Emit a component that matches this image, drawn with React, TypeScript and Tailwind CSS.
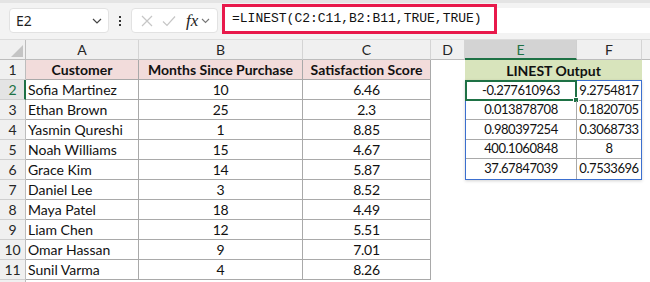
import React from 'react';

const rows = [
	['Sofia Martinez', '10', '6.46'],
	['Ethan Brown', '25', '2.3'],
	['Yasmin Qureshi', '1', '8.85'],
	['Noah Williams', '15', '4.67'],
	['Grace Kim', '14', '5.87'],
	['Daniel Lee', '3', '8.52'],
	['Maya Patel', '18', '4.49'],
	['Liam Chen', '12', '5.51'],
	['Omar Hassan', '9', '7.01'],
	['Sunil Varma', '4', '8.26'],
];

const linest = [
	['-0.277610963', '9.2754817'],
	['0.013878708', '0.1820705'],
	['0.980397254', '0.3068733'],
	['400.1060848', '8'],
	['37.67847039', '0.7533696'],
];

const cellFont = { fontFamily: 'Lato, "Liberation Sans", sans-serif' };

const Toolbar = () => (
	<div className="flex h-[37px] items-start border-b border-[#dcdcdc] bg-[#f3f3f3]">
		<div className="ml-[9px] mt-[5px] flex h-[25px] w-[100px] items-center justify-between rounded-[4px] border border-[#e2e2e2] bg-white pl-[6px] pr-[6px]">
			<span className="text-[14px] text-[#1f1f1f]" style={{ fontFamily: '"Noto Sans", sans-serif' }}>
				E2
			</span>
			<svg width="10" height="6" viewBox="0 0 10 6">
				<path d="M1 1l4 4 4-4" fill="none" stroke="#444" strokeWidth="1.2" />
			</svg>
		</div>
		<div className="mt-[5px] flex h-[25px] w-[22px] flex-col items-center justify-center gap-[2px]">
			<span className="h-[2px] w-[2px] bg-[#333]" />
			<span className="h-[2px] w-[2px] bg-[#333]" />
			<span className="h-[2px] w-[2px] bg-[#333]" />
		</div>
		<div className="mt-[5px] flex h-[25px] w-[87px] items-center rounded-[4px] border border-[#e2e2e2] bg-white pl-[9px]">
			<svg width="12" height="12" viewBox="0 0 12 12">
				<path d="M1 1l10 10M11 1L1 11" stroke="#c6c6c6" strokeWidth="1.2" />
			</svg>
			<svg width="14" height="12" viewBox="0 0 14 12" className="ml-[9px]">
				<path d="M1 6.5l4 4L13 1.5" fill="none" stroke="#c6c6c6" strokeWidth="1.2" />
			</svg>
			<span
				className="ml-[10px] text-[17px] italic leading-none text-[#222]"
				style={{ fontFamily: '"Liberation Serif", serif' }}
			>
				fx
			</span>
			<svg width="9" height="6" viewBox="0 0 9 6" className="ml-[3px]">
				<path d="M1 1l3.5 3.5L8 1" fill="none" stroke="#777" strokeWidth="1.1" />
			</svg>
		</div>
		<div className="ml-[4px] mt-[1px] flex h-[30px] w-[275px] items-center border-[3px] border-[#e8194b] bg-white pl-[7px]">
			<span className="text-[13px] text-[#111]" style={{ fontFamily: '"Liberation Mono", monospace' }}>
				=LINEST(C2:C11,B2:B11,TRUE,TRUE)
			</span>
		</div>
		<div className="mt-[5px] h-[25px] flex-1 bg-white" />
	</div>
);

const ColHead = ({ label, active }: { label: string; active?: boolean }) => (
	<div
		className={
			active
				? 'flex h-[20px] items-center justify-center border-r border-b-2 border-r-[#d0d0d0] border-b-[#1e7145] bg-[#d3d3d3] text-[14px] text-[#1e7145]'
				: 'flex h-[20px] items-center justify-center border-r border-b border-r-[#d4d4d4] border-b-[#bdbdbd] bg-[#f0f0f0] text-[14px] text-[#262626]'
		}
	>
		{label}
	</div>
);

const RowHead = ({ n, active }: { n?: number; active?: boolean }) => (
	<div
		className={
			active
				? 'flex h-[20px] items-center justify-center border-r-2 border-b border-r-[#1e7145] border-b-[#cfcfcf] bg-[#e4e4e4] pl-[1px] text-[14px] text-[#1e7145]'
				: 'flex h-[20px] items-center justify-center border-r border-b border-r-[#bdbdbd] border-b-[#cfcfcf] bg-[#f0f0f0] text-[14px] text-[#262626]'
		}
	>
		{n}
	</div>
);

const App = () => {
	return (
		<div className="w-[650px] overflow-hidden bg-white" style={cellFont}>
			<div className="h-[3px] bg-[#e4e4e4]" />
			<Toolbar />
			<div className="grid grid-cols-[26px_113px_164px_128px_34px_112px_65px_1fr] auto-rows-[20px]">
				{/* column headers */}
				<div className="flex h-[20px] items-end justify-end border-r border-b border-r-[#bdbdbd] border-b-[#bdbdbd] bg-[#f0f0f0] pb-[2px] pr-[2px]">
					<svg width="12" height="12" viewBox="0 0 12 12">
						<path d="M12 0V12H0Z" fill="#c4c4c4" />
					</svg>
				</div>
				<ColHead label="A" />
				<ColHead label="B" />
				<ColHead label="C" />
				<ColHead label="D" />
				<ColHead label="E" active />
				<ColHead label="F" />
				<div className="h-[20px] border-b border-b-[#bdbdbd] bg-[#f0f0f0]" />

				{/* row 1 */}
				<RowHead n={1} />
				<div className="flex items-center justify-center border-r border-b border-[#a9a9a9] bg-[#f2dcdb] text-[14px] font-bold text-[#111]">
					Customer
				</div>
				<div className="flex items-center justify-center border-r border-b border-[#a9a9a9] bg-[#f2dcdb] text-[14px] font-bold text-[#111]">
					Months Since Purchase
				</div>
				<div className="flex items-center justify-center border-r border-b border-[#a9a9a9] bg-[#f2dcdb] text-[14px] font-bold text-[#111]">
					Satisfaction Score
				</div>
				<div />
				<div className="col-span-2 flex items-center justify-center bg-[#d8e4bc] text-[14px] font-bold text-[#111]">
					LINEST Output
				</div>
				<div />

				{/* data rows */}
				{rows.map((r, i) => (
					<React.Fragment key={r[0]}>
						<RowHead n={i + 2} active={i === 0} />
						<div className="flex items-center border-r border-b border-[#a9a9a9] pl-[2px] text-[14px] text-[#111]">
							{r[0]}
						</div>
						<div className="flex items-center justify-center border-r border-b border-[#a9a9a9] text-[14px] tracking-[-0.3px] text-[#111]">
							{r[1]}
						</div>
						<div className="flex items-center justify-center border-r border-b border-[#a9a9a9] text-[14px] tracking-[-0.3px] text-[#111]">
							{r[2]}
						</div>
						<div />
						{i === 0 && (
							<div className="col-span-2 row-span-5 grid grid-cols-[111px_1fr] grid-rows-5 border border-[#3b6fcf] shadow-[0_1px_3px_rgba(0,0,0,0.18)]">
								{linest.map((l, j) => (
									<React.Fragment key={j}>
										<div
											className={
												j === 4
													? 'relative flex items-center justify-center border-r border-[#a9a9a9] text-[13px] tracking-[-0.45px] text-[#111]'
													: 'relative flex items-center justify-center border-r border-b border-[#a9a9a9] text-[13px] tracking-[-0.45px] text-[#111]'
											}
										>
											{l[0]}
											{j === 0 && (
												<div className="absolute -left-px -top-px -right-px -bottom-px border-2 border-[#1e7145]">
													<span className="absolute -bottom-[4px] -right-[4px] h-[6px] w-[6px] border border-white bg-[#1e7145]" />
												</div>
											)}
										</div>
										<div
											className={
												j === 4
													? 'flex items-center justify-center text-[13px] tracking-[-0.45px] text-[#111]'
													: 'flex items-center justify-center border-b border-[#a9a9a9] text-[13px] tracking-[-0.45px] text-[#111]'
											}
										>
											{l[1]}
										</div>
									</React.Fragment>
								))}
							</div>
						)}
						{i >= 5 && (
							<>
								<div />
								<div />
							</>
						)}
						<div />
					</React.Fragment>
				))}

				{/* row 12, cut off by the frame */}
				<RowHead />
			</div>
		</div>
	);
};

export default App;
